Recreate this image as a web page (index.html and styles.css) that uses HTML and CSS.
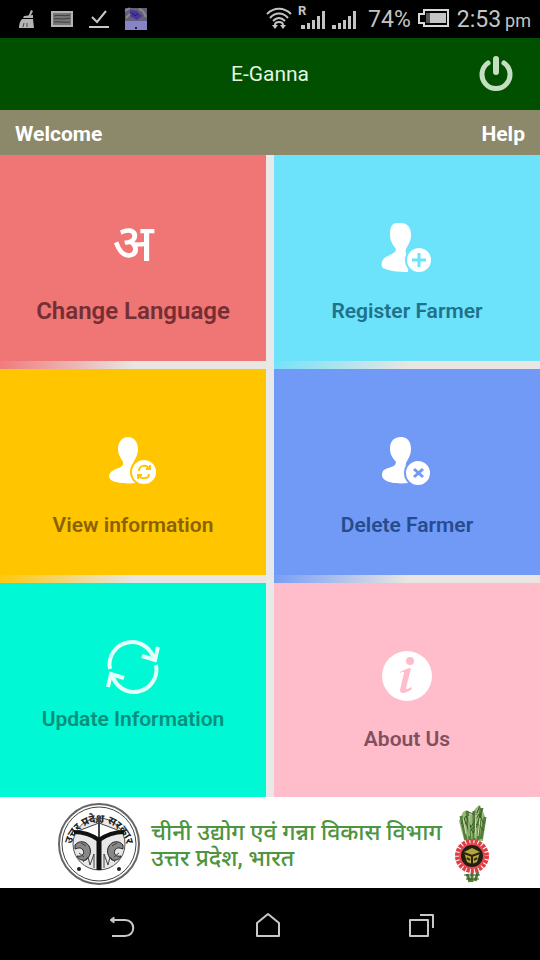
FILE: index.html
```html
<!DOCTYPE html>
<html lang="en">
<head>
    <meta charset="UTF-8">
    <meta name="viewport" content="width=device-width, initial-scale=1.0">
    <title>E-Ganna</title>
    <link rel="stylesheet" href="styles.css">
</head>
<body>
    <div class="status-bar">
        <div class="status-group notifications">
            <svg width="18" height="22" viewBox="0 0 18 22" fill="#b4b4b4"><path d="M13 2l2 1-3 6h-2z"/><path d="M6 8l9-1v3H5z"/><path d="M4 11h11l1 9H1c0-4 1-7 3-9z"/><path d="M5 19l1-4M9 19v-4" stroke="#444"/></svg>
            <svg width="22" height="22" viewBox="0 0 22 22"><path d="M1 4h20v14H1z" fill="#777" stroke="#b4b4b4" stroke-width="2"/><path d="M3 8c5-2 9 1 16-1M3 11c6-1 9 1 16-1M3 14c5-1 10 1 16 0" stroke="#3c3c3c" fill="none"/></svg>
            <svg width="22" height="22" viewBox="0 0 22 22" fill="none" stroke="#c8c8c8" stroke-width="2"><path d="M4 9l5 5 9-11M1 19h20"/></svg>
            <svg width="22" height="22" viewBox="0 0 22 22"><path d="M0 0h22v13H0z" fill="#64607c"/><path d="M5 2l7 1 5 5-5 4-7-4z" fill="#49359a"/><path d="M0 3l5-3M1 10l4-4M18 3l3 6M14 1l4 2" stroke="#8b8b8b" stroke-width="2"/><path d="M7 5l3 3 3-2" stroke="#222049" fill="none"/><path d="M0 13h22v9H0z" fill="#8584c9"/><path d="M10 19h2v2h-2z" fill="#222"/></svg>
        </div>
        <div class="status-group">
            <svg class="wifi" width="26" height="24" viewBox="0 0 26 24" fill="none" stroke="#c4c4c4" stroke-width="2"><path d="M1 8c7-7 17-7 24 0M4 12c5-6 13-6 18 0M7 15c4-4 8-4 12 0"/><path d="M9 22v-3c0-4 8-4 8 0v3"/><path d="M6 19h6l-3 4zM14 19h6l-3 4z" fill="#c4c4c4" stroke="none"/></svg>
            <svg class="signal" width="27" height="26" viewBox="0 0 27 26" fill="#c4c4c4"><path d="M3 19h4v4H3zM9 17h3v6H9zM14 14h3v9h-3zM19 10h3v13h-3zM24 5h3v18h-3z"/><text x="0" y="9" class="roaming">R</text></svg>
            <svg class="signal" width="25" height="26" viewBox="0 0 25 26" fill="#c4c4c4"><path d="M1 19h4v4H1zM7 17h3v6H7zM12 14h3v9h-3zM17 10h3v13h-3zM22 5h3v18h-3z"/></svg>
            <span class="battery-level">74%</span>
            <svg class="battery" width="31" height="18" viewBox="0 0 31 18"><path d="M6 1h24v16H6v-3H1V5h5z" fill="none" stroke="#d8d8d8" stroke-width="2"/><path d="M8 4h4v10H8z" fill="#555"/><path d="M12 4h16v10H12z" fill="#c4c4c4"/></svg>
            <span class="clock">2:53<small>pm</small></span>
        </div>
    </div>

    <header class="app-header">
        <h1>E-Ganna</h1>
        <button class="power" type="button" aria-label="Exit">
            <svg width="36" height="36" viewBox="0 0 36 36" fill="none" stroke="#c3dec0" stroke-linecap="round"><path d="M10 7A14 14 0 1 0 26 7" stroke-width="5"/><path d="M18 3v13" stroke-width="6"/></svg>
        </button>
    </header>

    <div class="welcome-bar">
        <span>Welcome</span>
        <a href="#help">Help</a>
    </div>

    <main class="tiles">
        <a class="tile language" href="#language">
            <span class="icon letter" lang="hi">अ</span>
            <span class="label">Change Language</span>
        </a>
        <a class="tile register" href="#register">
            <svg class="icon" width="52" height="50" viewBox="0 0 52 50"><path class="person" d="M13 0h7c6 0 10 4 10 12 0 6-3 10-5 14-1 3 0 7 3 11l-1 12c-10 0-19-1-25-4-3-3-1-9 3-11 5-3 10-4 10-8-3-4-6-8-6-14C9 4 11 0 16 0z"/><circle class="badge" cx="38" cy="37" r="13"/><path class="mark" d="M38 30v14M31 37h14"/></svg>
            <span class="label">Register Farmer</span>
        </a>
        <a class="tile view" href="#view">
            <svg class="icon" width="48" height="50" viewBox="0 0 48 50"><path class="person" d="M19 0c6 0 10 5 10 12s-4 11-5 15c-1 4 1 7 4 11l-1 8c-9 1-21 0-25-3-4-4-1-9 5-11 5-2 8-3 7-7-2-4-5-7-5-13C9 5 13 0 19 0z"/><circle class="badge" cx="35" cy="35" r="13"/><path class="mark thin" d="M30 34c0-6 8-7 10-2M37 32h4v-4M40 37c0 5-8 6-10 1M33 38h-4v4"/></svg>
            <span class="label">View information</span>
        </a>
        <a class="tile delete" href="#delete">
            <svg class="icon" width="52" height="50" viewBox="0 0 52 50"><path class="person" d="M20 0c7 0 10 5 10 12 0 6-3 10-5 14-1 4 1 7 4 11l-1 9c-11 1-20 0-24-3-3-2-4-5-2-9 3-4 13-3 13-9-3-4-6-7-6-13C9 5 12 0 20 0z"/><circle class="badge" cx="37" cy="36" r="13"/><path class="mark" d="M33 32l9 8M42 32l-9 8"/></svg>
            <span class="label">Delete Farmer</span>
        </a>
        <a class="tile update" href="#update">
            <svg class="icon" width="54" height="52" viewBox="0 0 54 52" fill="none" stroke="#e4fff9" stroke-width="4"><path d="M4 28A22 22 0 0 1 48 19M50 24A22 22 0 0 1 6 33"/><path d="M36 15l13 4 3-13M18 37L5 33 2 46"/></svg>
            <span class="label">Update Information</span>
        </a>
        <a class="tile about" href="#about">
            <svg class="icon" width="52" height="50" viewBox="1 1 50 50"><circle cx="26" cy="26" r="25" fill="#fff"/><circle cx="29" cy="11" r="4" fill="#ffbccb"/><path d="M19 22c4-2 8-4 11-4l-5 20c0 2 2 1 5-1l1 2c-5 4-12 6-12 1l4-17c0-2-2-1-4 0z" fill="#ffbccb"/></svg>
            <span class="label">About Us</span>
        </a>
    </main>

    <footer class="department" lang="hi">
        <svg class="emblem" width="82" height="82" viewBox="-41 -41 82 82" fill="none" stroke="#444">
            <circle r="40" stroke-width="2" stroke="#666"/>
            <circle r="37"/>
            <circle r="26" fill="#e8e8e8" stroke="#555"/>
            <path id="arc" d="M-28 6A28 28 0 1 1 28 6" stroke="none"/>
            <text class="emblem-text"><textPath href="#arc" startOffset="50%">उत्तर प्रदेश सरकार</textPath></text>
            <path d="M-21-13L0-21 21-13 0-4z" fill="#fff"/>
            <path d="M0-25V-5M-3-21l3-4 3 4" stroke-width="2"/>
            <path d="M-25-12c8 0 18 3 25 8 7-5 17-8 25-8" stroke="#111" stroke-width="4"/>
            <path d="M0-5v31" stroke="#111" stroke-width="5"/>
            <path d="M-24 1c4-5 11-4 14 1s1 11-3 14c-4 1-8-1-9-4 5 1 8-2 6-6-2-3-5-2-8-1zM24 1c-4-5-11-4-14 1s-1 11 3 14c4 1 8-1 9-4-5 1-8-2-6-6 2-3 5-2 8-1z" fill="#888" stroke="#222"/>
            <path d="M-16 18l5-5 2 8 4-11v14M16 18l-5-5-2 8-4-11v14M-20 9l5 4M20 9l-5 4M-18-1l5 3M18-1l-5 3"/>
            <circle cx="-20" cy="25" r="2" fill="#222" stroke="none"/>
            <circle cx="20" cy="25" r="2" fill="#222" stroke="none"/>
        </svg>
        <p>चीनी उद्योग एवं गन्ना विकास विभाग<br>उत्तर प्रदेश, भारत</p>
        <svg class="cane" width="36" height="80" viewBox="0 0 36 80" fill="none">
            <path d="M10 36L5 17l4-9 4-2 4 5 4-6 4-4 3 4 4 10-3 22z" fill="#98b87b"/>
            <path d="M12 36L7 12M16 36L13 7M20 36V7M24 36l3-32M27 35l4-22M13 70l3 8M18 69v9M24 68l-3 9" stroke="#537d38" stroke-width="3"/>
            <path d="M7 20l5-8 5 11 8-13 5 10M8 23l6-6 5 12 5-9 6 7M26 2l-4 9-8-3M29 4l-6 16-8 8M10 14l6 16M10 71l16 0M12 75h13" stroke="#365d25"/>
            <path d="M15 12v20M22 9l-1 25M26 14l-2 18M9 14l3 16" stroke="#d5e1ad"/>
            <circle cx="18" cy="52" r="14" stroke="#df3d46" stroke-width="6" stroke-dasharray="3 1"/>
            <circle cx="18" cy="52" r="12" fill="#211e14" stroke="#e84a50" stroke-width="2"/>
            <path d="M10 48l8-4 8 4-3 10-5 2-5-2z" fill="#b4a63d"/>
            <path d="M10 49l8 3 8-3M18 52v8M13 54l3 2M23 54l-3 2" stroke="#29240d" stroke-width="2"/>
        </svg>
    </footer>

    <nav class="system-nav">
        <button type="button" aria-label="Back"><svg width="28" height="28" viewBox="0 0 28 28"><path d="M3 6h14c11 0 11 16 0 16H4"/><path d="M6 3L2 6l4 3z" fill="#c8c8c8" stroke-width="1"/></svg></button>
        <button type="button" aria-label="Home"><svg width="28" height="28" viewBox="0 0 28 28"><path d="M11 0L0 9v13h22V9z"/></svg></button>
        <button type="button" aria-label="Recent apps"><svg width="28" height="28" viewBox="0 0 28 28"><path d="M4 6h18v16H4zM14 1h13v13"/></svg></button>
    </nav>
</body>
</html>
```
FILE: styles.css
```css
* { box-sizing: border-box; }
body { margin: 0; min-height: 100vh; display: flex; flex-direction: column; font-family: Roboto, "Noto Sans", sans-serif; background: #e8e8e8; }
a { color: inherit; text-decoration: none; }
button { padding: 0; border: 0; background: none; cursor: pointer; }
svg { display: block; flex: none; overflow: visible; }

/* android status bar */
.status-bar { display: flex; justify-content: space-between; align-items: center; height: 38px; padding: 0 9px 0 18px; background: #000; color: #c4c4c4; }
.status-group { display: flex; align-items: center; white-space: nowrap; }
.notifications { gap: 15px; }
.wifi { margin: 0 6px 2px 0; }
.signal { margin-right: 6px; }
.roaming { font: bold 13px Roboto, sans-serif; }
.battery-level { margin: 0 7px 0 6px; font-size: 23px; }
.battery { margin: 0 8px 3px 0; }
.clock { font-size: 23px; }
.clock small { margin-left: 4px; font-size: 18px; }

.app-header { display: grid; grid-template-columns: 1fr auto 1fr; align-items: center; height: 72px; padding: 0 26px; background: #005000; color: #e4f5e0; }
.app-header h1 { grid-column: 2; margin: 0; font-size: 21px; font-weight: 400; }
.power { justify-self: end; }

.welcome-bar { display: flex; justify-content: space-between; align-items: center; height: 45px; padding: 2px 15px 0; background: #8c886a; color: #fff; font-size: 21px; font-weight: 700; }

/* menu */
.tiles { flex: 1; display: grid; grid-template-columns: 1fr 1fr; grid-auto-rows: 1fr; column-gap: 8px; }
.tile { display: flex; flex-direction: column; align-items: center; min-height: 206px; padding-top: 68px; background: var(--tile); border-bottom: 8px solid; border-image: linear-gradient(to right, var(--tile), #e8e5e2 50%) 8; }
.tile .icon { height: 50px; margin-bottom: 25px; }
.label { font-size: 21px; line-height: 26px; font-weight: 600; }
.person, .badge { fill: #fff; }
.badge { stroke: var(--tile); stroke-width: 2; }
.mark { fill: none; stroke: var(--tile); stroke-width: 3; }
.mark.thin { stroke-width: 2; }
.letter { color: #fff; font-size: 52px; line-height: 42px; font-weight: 500; }

.language { --tile: #f07575; color: #742f32; }
.language .label { font-size: 24px; }
.register { --tile: #6de2fb; color: #20718a; }
.view { --tile: #ffc600; color: #8a6200; }
.delete { --tile: #709af6; color: #264c8e; }
.update { --tile: #00f8d5; color: #078f7b; padding-top: 58px; border: 0; }
.update .icon { height: 52px; margin-bottom: 13px; }
.about { --tile: #ffbccb; color: #80505f; border: 0; }

.department { display: flex; align-items: center; justify-content: center; height: 91px; padding: 2px 50px 0 58px; background: #fff; color: #4f9440; }
.department p { flex: 1; margin: 0; padding: 4px 0 0 11px; font-size: 23px; line-height: 26px; font-weight: 500; white-space: nowrap; }
.emblem-text { font-size: 11px; font-weight: 700; fill: #222; stroke: none; text-anchor: middle; }

.system-nav { display: flex; justify-content: space-between; align-items: center; height: 72px; padding: 7px 106px 0 108px; background: #000; }
.system-nav svg { fill: none; stroke: #c8c8c8; stroke-width: 2; stroke-linejoin: round; }
```
